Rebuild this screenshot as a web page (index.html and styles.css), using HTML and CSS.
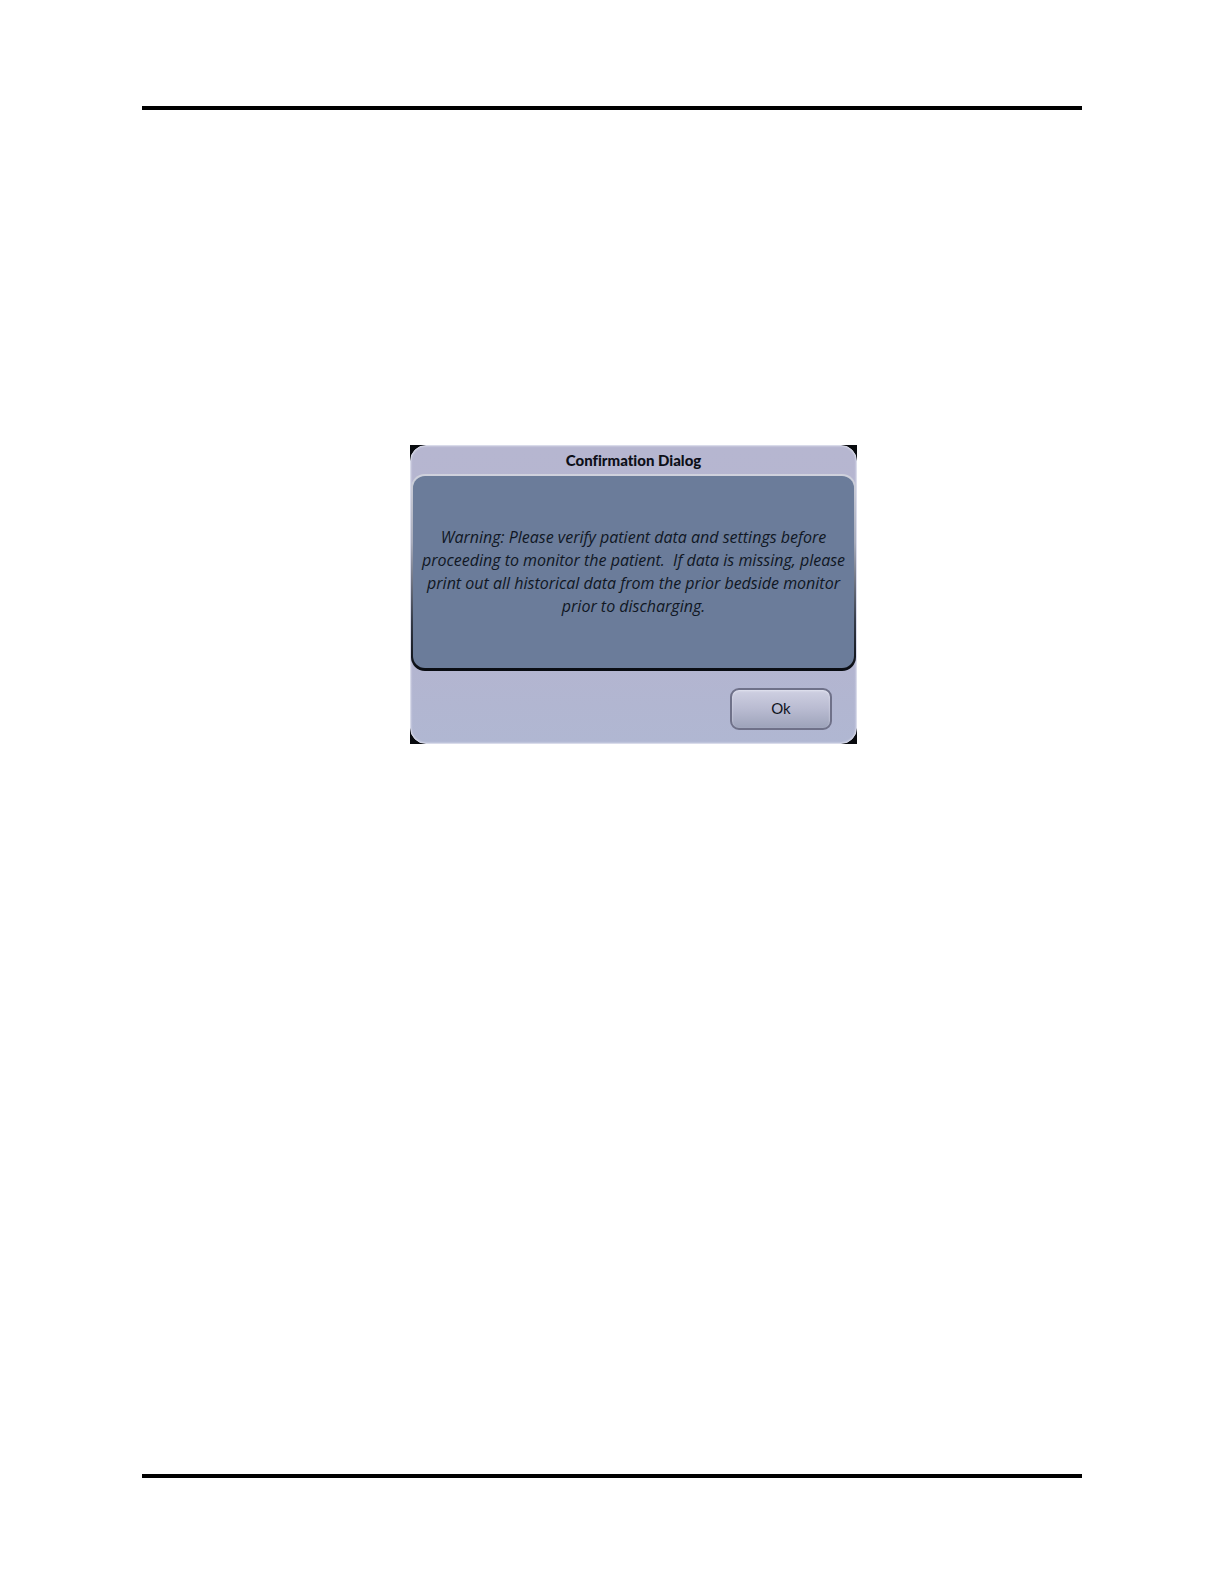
FILE: index.html
```
<!DOCTYPE html>
<html lang="en">
<head>
    <meta charset="UTF-8">
    <meta name="viewport" content="width=device-width, initial-scale=1.0">
    <title>Confirmation Dialog</title>
    <link rel="stylesheet" href="styles.css">
</head>
<body>
    <main class="page">
        <div class="dialog-frame">
            <section class="dialog" role="alertdialog" aria-labelledby="dialog-title" aria-describedby="dialog-message">
                <h1 class="dialog-title" id="dialog-title">Confirmation Dialog</h1>
                <div class="dialog-panel">
                    <p class="dialog-message" id="dialog-message">Warning: Please verify patient data and settings before<br>proceeding to monitor the patient.&nbsp; If data is missing, please<br>print out all historical data from the prior bedside monitor<br>prior to discharging.</p>
                </div>
                <div class="dialog-actions">
                    <button class="ok-button" type="button">Ok</button>
                </div>
            </section>
        </div>
    </main>
</body>
</html>
```
FILE: styles.css
```
* {
    margin: 0;
    padding: 0;
    box-sizing: border-box;
}

body {
    font-family: "Open Sans", "Noto Sans", sans-serif;
    background: white;
    min-height: 100vh;
    padding: 106px 142px;
    display: flex;
}

/* Page area between the header and footer rules */
.page {
    flex: 1;
    border-top: 4px solid black;
    border-bottom: 4px solid black;
    padding: 335px 0 40px 43px;
}

.dialog-frame {
    max-width: 447px;
    margin: 0 auto;
    background: #080a0e;
}

.dialog {
    border: 1px solid #d9dbea;
    border-radius: 16px;
    background: linear-gradient(180deg, #b6b6d0 0%, #b3b5d0 75%, #b0b7d2 100%);
    box-shadow: inset 0 0 2px #e6e7f2;
    overflow: hidden;
}

.dialog-title {
    color: #0d0f18;
    font-family: Lato, sans-serif;
    font-size: 15px;
    font-weight: 900;
    font-variant-ligatures: none;
    line-height: 28px;
    text-align: center;
}

/* The bevel runs from light at the top to black at the bottom */
.dialog-panel {
    background: linear-gradient(180deg, #d0d2dd 0%, #a7abba 35%, #343a47 75%, #080b11 100%);
    border-radius: 14px;
    padding: 2px 2px 3px;
}

.dialog-message {
    display: flow-root;
    background: #6b7c9a;
    border-radius: 12px;
    color: #101724;
    font-size: 16px;
    font-style: italic;
    line-height: 23px;
    text-align: center;
    white-space: nowrap;
    padding: 50px 0;
}

.dialog-actions {
    display: flex;
    justify-content: flex-end;
    padding: 17px 24px 13px;
}

.ok-button {
    width: 102px;
    height: 42px;
    border: 2px solid #6f7189;
    border-radius: 9px;
    background: linear-gradient(180deg, #cfd0e2 0%, #b9bbd1 50%, #9da3ba 100%);
    box-shadow: inset 0 1px 2px #e2e3ef;
    color: #10131c;
    font-family: Lato, sans-serif;
    font-size: 15px;
    line-height: 20px;
    padding-bottom: 3px;
    cursor: pointer;
}

.ok-button:active {
    background: #9da3ba;
}
```
